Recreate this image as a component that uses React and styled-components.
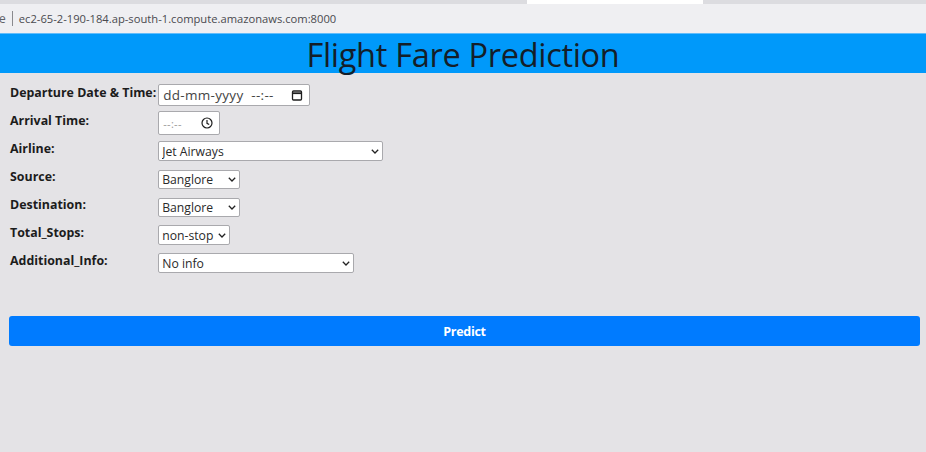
import React from 'react';
import styled, { createGlobalStyle } from 'styled-components';

const GlobalStyle = createGlobalStyle`
  html, body {
    margin: 0;
    padding: 0;
    background: #e4e3e6;
    font-family: "Open Sans", "Noto Sans", Arial, sans-serif;
  }
`;

const TabStrip = styled.div`
  height: 4px;
  background: #dcdce0;
  display: flex;
`;

const ActiveTab = styled.div`
  margin-left: 527px;
  width: 176px;
  background: #ffffff;
`;

const AddressBar = styled.div`
  height: 29px;
  background: #efeff2;
  display: flex;
  align-items: center;
  gap: 6px;
  font-size: 11.2px;
  color: #5f6368;
  white-space: nowrap;
  overflow: hidden;
`;

const Muted = styled.span`
  margin-left: -1px;
  font-size: 12px;
`;

const Divider = styled.span`
  width: 1px;
  height: 15px;
  background: #8a8a8e;
`;

const Url = styled.span`
  color: #4a4a4f;
`;

const Header = styled.h1`
  box-sizing: border-box;
  margin: 0;
  height: 40px;
  padding-top: 2px;
  border-top: 1px solid #62bdfb;
  background: #0099fa;
  color: #141e29;
  font-weight: 500;
  font-size: 32.5px;
  line-height: 37px;
  text-align: center;
  letter-spacing: -0.3px;
`;

const Form = styled.form`
  padding: 8px 7px 0 10px;
`;

const Fields = styled.div`
  display: grid;
  grid-template-columns: max-content 1fr;
  grid-auto-rows: 28px;
  column-gap: 2px;
`;

const Label = styled.label`
  align-self: start;
  padding-top: 4px;
  line-height: 15px;
  font-size: 12.4px;
  font-weight: 700;
  color: #1c1c1c;
`;

const Control = styled.div`
  display: flex;
  align-items: center;
`;

const FakeInput = styled.div`
  box-sizing: border-box;
  width: ${(p) => p.$w}px;
  height: ${(p) => p.$h}px;
  background: #fff;
  border: 1px solid #a9a9ad;
  border-radius: 2px;
  display: flex;
  align-items: center;
  padding: 0 6px 0 4px;
`;

const TextInput = styled.input`
  flex: 1;
  min-width: 0;
  border: none;
  outline: none;
  padding: 0;
  background: transparent;
  font-family: inherit;
  font-size: ${(p) => (p.$small ? 11 : 13.5)}px;
  color: #303030;
  word-spacing: 4px;
  &::placeholder {
    color: ${(p) => (p.$small ? '#9a9a9a' : '#444')};
    letter-spacing: 0.3px;
  }
`;

const SelectBox = styled.div`
  position: relative;
  width: ${(p) => p.$w}px;
  height: ${(p) => p.$h}px;
`;

const Select = styled.select`
  appearance: none;
  display: block;
  box-sizing: border-box;
  width: 100%;
  height: 100%;
  font-family: inherit;
  font-size: 12.2px;
  color: #2a2a2a;
  background: #fff;
  border: 1px solid #a9a9ad;
  border-radius: 2px;
  padding: 0 12px 0 3px;
  outline: none;
`;

const Chevron = styled.svg`
  position: absolute;
  right: 4px;
  top: 50%;
  margin-top: -2px;
  pointer-events: none;
`;

const Submit = styled.button`
  display: block;
  width: calc(100% + 2px);
  margin-left: -1px;
  height: 30px;
  margin-top: 39px;
  border: none;
  border-radius: 3px;
  background: #007bff;
  color: #fff;
  font-family: inherit;
  font-weight: 700;
  font-size: 12.5px;
  letter-spacing: -0.3px;
  cursor: pointer;
`;

const CalendarIcon = () => (
  <svg width="12" height="12" viewBox="0 0 12 12" fill="none" stroke="#1e1e1e" strokeWidth="1.3">
    <rect x="1.5" y="2" width="9" height="9" rx="1" />
    <line x1="1.5" y1="4.2" x2="10.5" y2="4.2" strokeWidth="1.8" />
  </svg>
);

const ClockIcon = () => (
  <svg width="12" height="12" viewBox="0 0 12 12" fill="none" stroke="#1e1e1e" strokeWidth="1.2">
    <circle cx="6" cy="6" r="5" />
    <polyline points="6,3 6,6.3 8.2,7.6" />
  </svg>
);

const airlines = [
  'Jet Airways', 'IndiGo', 'Air India', 'Multiple carriers', 'SpiceJet', 'Vistara',
  'Air Asia', 'GoAir', 'Multiple carriers Premium economy', 'Jet Airways Business',
  'Vistara Premium economy', 'Trujet',
];
const sources = ['Banglore', 'Kolkata', 'Delhi', 'Chennai', 'Mumbai'];
const destinations = ['Banglore', 'Cochin', 'Delhi', 'Kolkata', 'Hyderabad', 'New Delhi'];
const stops = ['non-stop', '1 stop', '2 stops', '3 stops', '4 stops'];
const infos = [
  'No info', 'In-flight meal not included', 'No check-in baggage included', '1 Short layover',
  '1 Long layover', 'Change airports', 'Business class', 'Red-eye flight', '2 Long layover',
];

const selects = [
  { id: 'airline', label: 'Airline:', options: airlines, w: 225, h: 20 },
  { id: 'source', label: 'Source:', options: sources, w: 82, h: 19 },
  { id: 'destination', label: 'Destination:', options: destinations, w: 82, h: 19 },
  { id: 'stops', label: 'Total_Stops:', options: stops, w: 72, h: 20 },
  { id: 'info', label: 'Additional_Info:', options: infos, w: 196, h: 20 },
];

const App = () => (
  <>
    <GlobalStyle />
    <TabStrip>
      <ActiveTab />
    </TabStrip>
    <AddressBar>
      <Muted>e</Muted>
      <Divider />
      <Url>ec2-65-2-190-184.ap-south-1.compute.amazonaws.com:8000</Url>
    </AddressBar>
    <Header>Flight Fare Prediction</Header>
    <Form onSubmit={(e) => e.preventDefault()}>
      <Fields>
        <Label htmlFor="dep">Departure Date &amp; Time:</Label>
        <Control>
          <FakeInput $w={152} $h={22}>
            <TextInput id="dep" placeholder="dd-mm-yyyy --:--" />
            <CalendarIcon />
          </FakeInput>
        </Control>
        <Label htmlFor="arr">Arrival Time:</Label>
        <Control>
          <FakeInput $w={62} $h={24}>
            <TextInput id="arr" $small placeholder="--:--" />
            <ClockIcon />
          </FakeInput>
        </Control>
        {selects.map((s) => (
          <React.Fragment key={s.id}>
            <Label htmlFor={s.id}>{s.label}</Label>
            <Control>
              <SelectBox $w={s.w} $h={s.h}>
                <Select id={s.id}>
                  {s.options.map((o) => (
                    <option key={o}>{o}</option>
                  ))}
                </Select>
                <Chevron width="8" height="5" viewBox="0 0 8 5" fill="none" stroke="#222" strokeWidth="1.3">
                  <polyline points="0.8,0.8 4,4 7.2,0.8" />
                </Chevron>
              </SelectBox>
            </Control>
          </React.Fragment>
        ))}
      </Fields>
      <Submit type="submit">Predict</Submit>
    </Form>
  </>
);

export default App;
